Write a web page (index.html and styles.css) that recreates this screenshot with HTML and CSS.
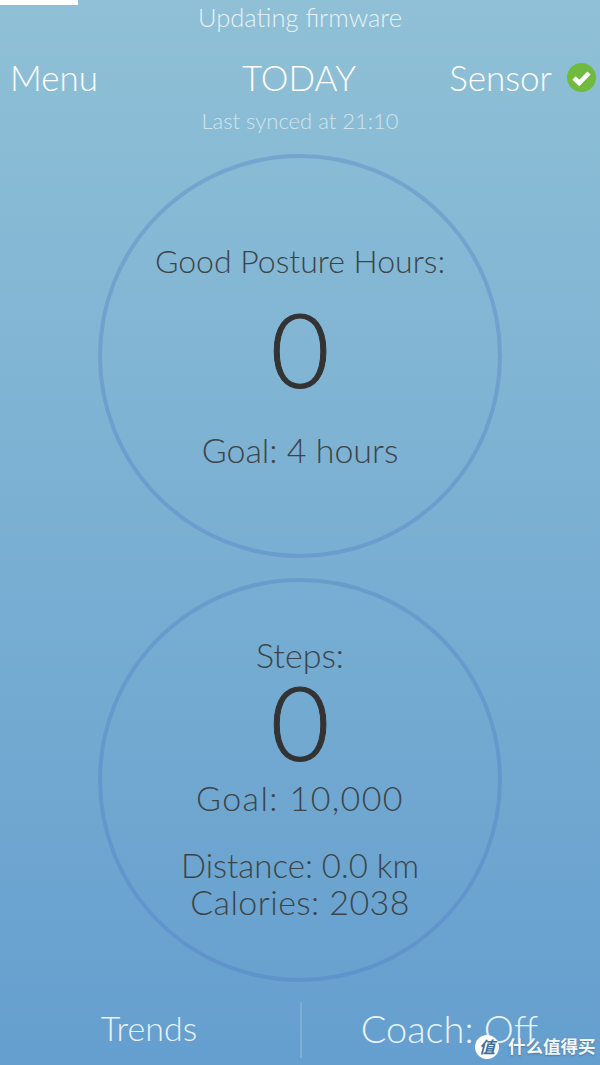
FILE: index.html
```html
<!DOCTYPE html>
<html lang="en">
<head>
<meta charset="utf-8">
<title>Today</title>
<link rel="stylesheet" href="styles.css">
</head>
<body>
<div class="app">
  <div class="progress"></div>
  <div class="status">Updating firmware</div>
  <header class="nav">
    <div class="nav-side">Menu</div>
    <div class="nav-title">TODAY</div>
    <div class="nav-side nav-right">Sensor
      <svg class="check" viewBox="0 0 29 29" width="29" height="29" aria-hidden="true">
        <circle cx="14.5" cy="14.5" r="14.5" fill="#6fba3f"/>
        <path d="M7 15l5.2 5L22 10" fill="none" stroke="#fff" stroke-width="4.6"/>
      </svg>
    </div>
  </header>
  <div class="synced">Last synced at 21:10</div>
  <main class="circles">
    <section class="circle circle-posture">
      <div class="label label-posture">Good Posture Hours:</div>
      <div class="big big-posture">0</div>
      <div class="label">Goal: 4 hours</div>
    </section>
    <section class="circle circle-steps">
      <div class="label">Steps:</div>
      <div class="big big-steps">0</div>
      <div class="label label-goal">Goal: 10,000</div>
      <div class="label label-distance">Distance: 0.0 km</div>
      <div class="label label-calories">Calories: 2038</div>
    </section>
  </main>
  <footer class="tabs">
    <div class="tab tab-left">Trends</div>
    <div class="tab tab-right">Coach: Off</div>
  </footer>
  <div class="watermark">
    <span class="wm-badge">值</span>
    <span class="wm-text">什么值得买</span>
  </div>
</div>
</body>
</html>
```
FILE: styles.css
```css
* { box-sizing: border-box; }
html, body { margin: 0; padding: 0; }
body { width: 600px; height: 1065px; overflow: hidden; }
.app {
  position: relative;
  width: 600px;
  height: 1065px;
  display: flex;
  flex-direction: column;
  align-items: center;
  background: linear-gradient(#8fc0d6, #659fcf);
  font-family: Lato, "Noto Sans CJK SC", sans-serif;
  font-weight: 300;
  color: #fff;
}
.progress { align-self: flex-start; width: 78px; height: 5px; background: #fff; flex: none; }
.status { font-size: 25.5px; line-height: 30px; margin-top: -3px; height: 30px; color: #e6f2f6; }
.nav {
  width: 100%;
  height: 50px;
  margin-top: 20px;
  padding: 0 4px 0 10px;
  display: grid;
  grid-template-columns: 1fr auto 1fr;
  align-items: center;
  font-size: 35px;
}
.nav-title { font-size: 35px; margin-right: 8px; }
.nav-right { display: flex; align-items: center; justify-content: flex-end; gap: 15px; }
.check { flex: none; }
.synced { font-size: 22px; line-height: 28px; color: #cfe5ee; height: 28px; margin-top: 5px; }
.circles { display: flex; flex-direction: column; gap: 20px; margin-top: 19px; }
.circle {
  width: 404px;
  height: 404px;
  border: 4px solid rgba(75, 120, 195, 0.33);
  border-radius: 50%;
  display: flex;
  flex-direction: column;
  align-items: center;
  color: #3c4448;
}
.label { font-size: 34px; line-height: 38px; white-space: nowrap; }
.label-posture { font-size: 32px; }
.label-goal { letter-spacing: 1.4px; margin-top: 17px; }
.label-distance { font-size: 33px; margin-top: 29px; }
.label-calories { letter-spacing: 0.4px; margin-top: -1px; }
.big { font-size: 102px; color: #333; -webkit-text-stroke: 1px #333; }
.circle-posture { padding-top: 84px; }
.big-posture { line-height: 80px; margin-top: 29px; margin-bottom: 42px; }
.circle-steps { padding-top: 54px; }
.big-steps { line-height: 80px; margin-top: 8px; }
.tabs {
  width: 100%;
  margin-top: 20px;
  height: 56px;
  display: grid;
  grid-template-columns: 300px 1fr;
  align-items: center;
  font-size: 37px;
  color: #e8f2f8;
}
.tab { text-align: center; height: 56px; line-height: 52px; }
.tab-left { font-size: 34px; padding-right: 2px; }
.tab-right { border-left: 2px solid #7fb0d2; font-size: 38px; padding-right: 3px; }
.watermark {
  position: absolute;
  left: 475px;
  top: 1035px;
  display: flex;
  align-items: center;
  gap: 9px;
}
.wm-badge {
  width: 24px;
  height: 24px;
  border-radius: 50%;
  background: #fff;
  color: #3f6f9c;
  font-size: 16px;
  font-weight: 700;
  font-style: italic;
  line-height: 24px;
  text-align: center;
}
.wm-text { font-size: 17.5px; font-weight: 700; color: #f4f7fa; white-space: nowrap; line-height: 24px; text-shadow: 0 1px 2px rgba(50, 80, 110, 0.5); }
```
